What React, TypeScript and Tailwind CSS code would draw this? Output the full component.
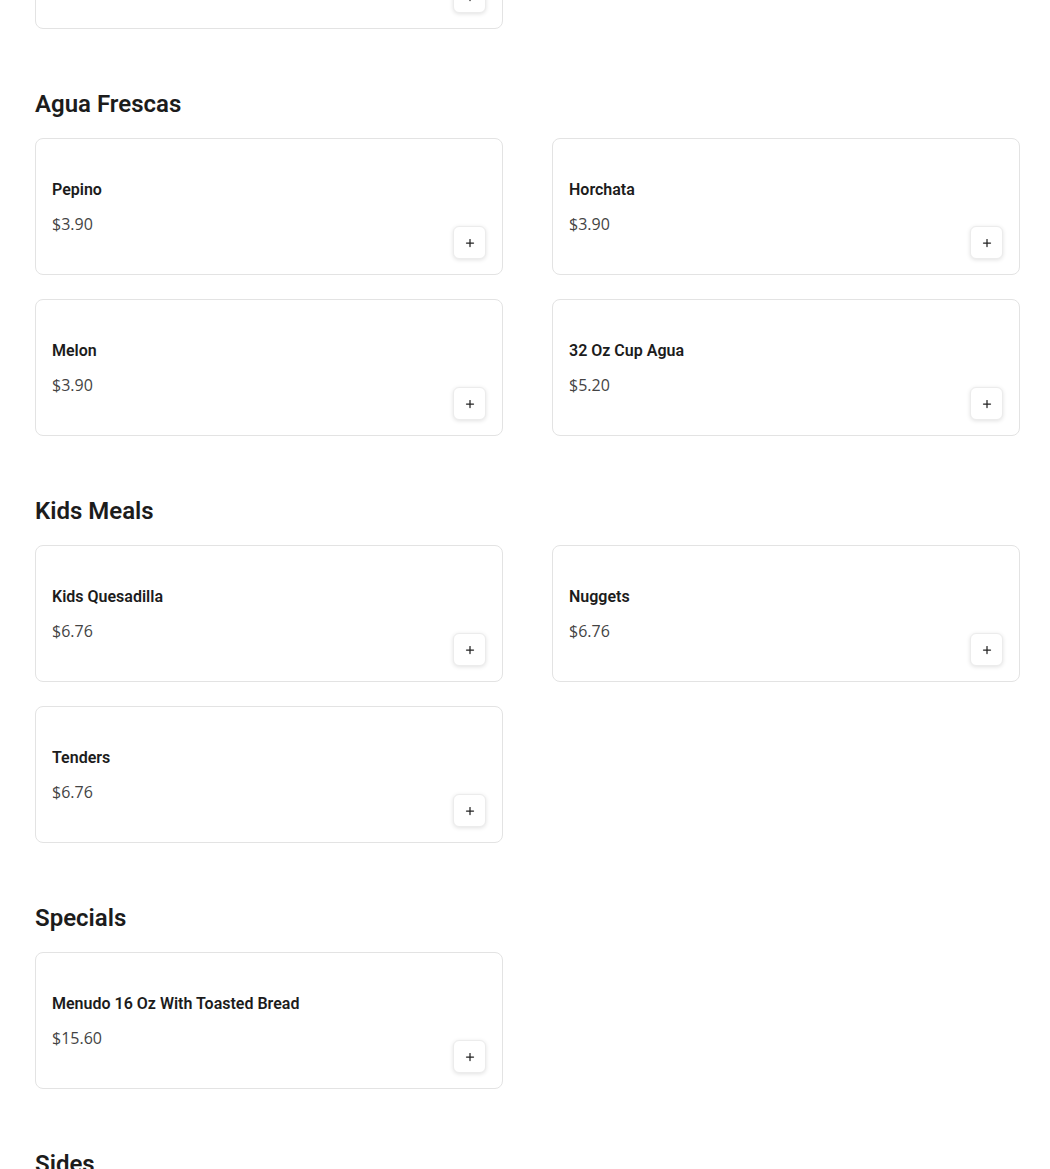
import { Plus } from "lucide-react";

type Item = { name: string; price: string };

const sections: { title: string; items: Item[] }[] = [
  {
    title: "Agua Frescas",
    items: [
      { name: "Pepino", price: "$3.90" },
      { name: "Horchata", price: "$3.90" },
      { name: "Melon", price: "$3.90" },
      { name: "32 Oz Cup Agua", price: "$5.20" },
    ],
  },
  {
    title: "Kids Meals",
    items: [
      { name: "Kids Quesadilla", price: "$6.76" },
      { name: "Nuggets", price: "$6.76" },
      { name: "Tenders", price: "$6.76" },
    ],
  },
  {
    title: "Specials",
    items: [{ name: "Menudo 16 Oz With Toasted Bread", price: "$15.60" }],
  },
];

function ItemCard({ item }: { item?: Item }) {
  return (
    <div className="flex h-[137px] items-end justify-between rounded-lg border border-[#e3e3e3] bg-white pl-4 pr-4 pb-[15px] pt-[39px]">
      <div className="self-start">
        {item && (
          <>
            <h3 className="font-['Roboto',sans-serif] text-[16px] font-semibold leading-6 text-[#1c1c1c]">
              {item.name}
            </h3>
            <p className="mt-[10px] font-['Open_Sans',sans-serif] text-[16px] leading-6 text-[#444]">
              {item.price}
            </p>
          </>
        )}
      </div>
      <button className="flex h-[33px] w-[33px] items-center justify-center rounded-md border border-[#ececec] bg-white shadow-[0_1px_4px_rgba(0,0,0,0.12)]">
        <Plus size={12} strokeWidth={2.5} className="text-[#222]" />
      </button>
    </div>
  );
}

export default function App() {
  return (
    <div className="min-h-screen overflow-hidden bg-white pl-[35px] pr-[30px] font-['Roboto',sans-serif]">
      {/* tail of the previous section */}
      <div className="-mt-[108px] grid grid-cols-2 gap-x-[49px]">
        <ItemCard />
      </div>
      {sections.map((s) => (
        <section key={s.title}>
          <h2 className="mb-[17px] mt-[58px] text-[24px] font-semibold leading-[34px] text-[#1c1c1c]">
            {s.title}
          </h2>
          <div className="grid grid-cols-2 gap-x-[49px] gap-y-[24px]">
            {s.items.map((it) => (
              <ItemCard key={it.name} item={it} />
            ))}
          </div>
        </section>
      ))}
      <h2 className="mt-[58px] text-[24px] font-semibold leading-[34px] text-[#1c1c1c]">
        Sides
      </h2>
    </div>
  );
}
